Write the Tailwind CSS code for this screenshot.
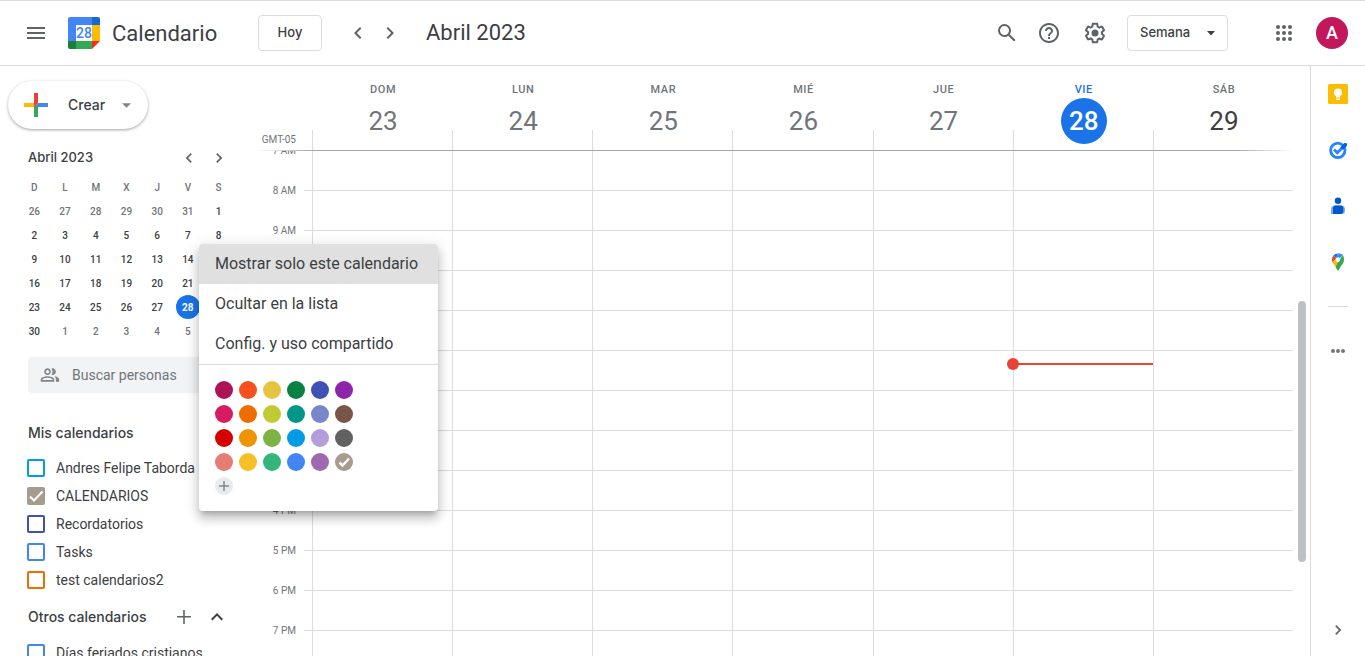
<!DOCTYPE html>
<html lang="es">
<head>
    <meta charset="UTF-8">
    <meta name="viewport" content="width=device-width, initial-scale=1.0">
    <title>Calendario - Semana</title>
    <script src="https://cdn.jsdelivr.net/npm/@tailwindcss/browser@4"></script>
</head>
<body class="flex flex-col h-screen overflow-hidden bg-white text-[#3c4043] font-['Roboto',sans-serif]">

    <!-- Top bar -->
    <header class="flex items-center shrink-0 h-[66px] border-y border-[#dadce0] pl-6 pr-[17px]">
        <button class="text-[#5f6368]" aria-label="Menú principal">
            <svg class="size-6" viewBox="0 0 24 24" fill="currentColor"><path d="M3 18h18v-2H3v2zm0-5h18v-2H3v2zm0-7v2h18V6H3z"/></svg>
        </button>
        <div class="flex items-center ml-5 gap-3">
            <svg class="size-8" viewBox="0 0 32 32">
                <path d="M2 0h22v8H8v16H0V2a2 2 0 0 1 2-2z" fill="#4285f4"/>
                <path d="M24 0h6a2 2 0 0 1 2 2v6h-8z" fill="#1967d2"/>
                <path d="M24 8h8v16h-8z" fill="#fbbc04"/>
                <path d="M0 24h8v8H2a2 2 0 0 1-2-2z" fill="#188038"/>
                <path d="M8 24h16v8H8z" fill="#34a853"/>
                <path d="M24 24h8l-8 8z" fill="#f22d25"/>
                <path d="M8 8h16v16H8z" fill="#fff"/>
                <text x="16" y="21" text-anchor="middle" font-family="Roboto" font-size="14" font-weight="500" fill="#4285f4">28</text>
            </svg>
            <span class="w-[108px] pt-0.5 text-[22px] leading-7">Calendario</span>
        </div>
        <button class="ml-[38px] h-9 w-16 border border-[#dadce0] rounded font-['Inter',sans-serif] text-[13px] font-medium">Hoy</button>
        <button class="ml-6 text-[#5f6368]" aria-label="Semana anterior">
            <svg class="size-6" viewBox="0 0 24 24" fill="currentColor"><path d="M15.41 7.41 14 6l-6 6 6 6 1.41-1.41L10.83 12z"/></svg>
        </button>
        <button class="ml-2 text-[#5f6368]" aria-label="Semana siguiente">
            <svg class="size-6" viewBox="0 0 24 24" fill="currentColor"><path d="M10 6 8.59 7.41 13.17 12l-4.58 4.59L10 18l6-6z"/></svg>
        </button>
        <h1 class="ml-6 text-[22px] leading-7">Abril 2023</h1>

        <div class="flex items-center ml-auto text-[#5f6368]">
            <button aria-label="Buscar">
                <svg class="size-6" viewBox="0 0 24 24" fill="currentColor"><path d="M20.49 19l-5.73-5.73C15.53 12.2 16 10.91 16 9.5A6.5 6.5 0 1 0 9.5 16c1.41 0 2.7-.47 3.77-1.24L19 20.49 20.49 19zM5 9.5C5 7.01 7.01 5 9.5 5S14 7.01 14 9.5 11.99 14 9.5 14 5 11.99 5 9.5z"/></svg>
            </button>
            <button class="ml-[18px]" aria-label="Ayuda">
                <svg class="size-6" viewBox="0 0 24 24" fill="currentColor"><path d="M11 18h2v-2h-2v2zm1-16C6.48 2 2 6.48 2 12s4.48 10 10 10 10-4.48 10-10S17.52 2 12 2zm0 18c-4.41 0-8-3.59-8-8s3.59-8 8-8 8 3.59 8 8-3.59 8-8 8zm0-14c-2.21 0-4 1.79-4 4h2c0-1.1.9-2 2-2s2 .9 2 2c0 2-3 1.75-3 5h2c0-2.25 3-2.5 3-5 0-2.21-1.79-4-4-4z"/></svg>
            </button>
            <button class="ml-[22px]" aria-label="Configuración">
                <svg class="size-6" viewBox="0 0 24 24" fill="currentColor"><path d="M13.85 22.25h-3.7c-.74 0-1.36-.54-1.45-1.27l-.27-1.89c-.27-.14-.53-.29-.79-.46l-1.8.72c-.7.26-1.47-.03-1.81-.65L2.2 15.53c-.35-.66-.2-1.44.36-1.88l1.53-1.19c-.01-.15-.02-.3-.02-.46 0-.15.01-.31.02-.46l-1.52-1.19c-.59-.45-.74-1.26-.37-1.88l1.85-3.19c.34-.62 1.11-.9 1.79-.63l1.81.73c.26-.17.52-.32.78-.46l.27-1.91c.09-.7.71-1.25 1.44-1.25h3.7c.74 0 1.36.54 1.45 1.27l.27 1.89c.27.14.53.29.79.46l1.8-.72c.71-.26 1.48.03 1.82.65l1.84 3.18c.36.66.2 1.44-.36 1.88l-1.52 1.19c.01.15.02.3.02.46s-.01.31-.02.46l1.52 1.19c.56.45.72 1.23.37 1.86l-1.86 3.22c-.34.62-1.11.9-1.8.63l-1.8-.72c-.26.17-.52.32-.78.46l-.27 1.91c-.1.68-.72 1.22-1.46 1.22zm-3.23-2h2.76l.37-2.55.53-.22c.44-.18.88-.44 1.34-.78l.45-.34 2.38.96 1.38-2.4-2.03-1.58.07-.56c.03-.26.06-.51.06-.78s-.03-.53-.06-.78l-.07-.56 2.03-1.58-1.39-2.4-2.39.96-.45-.35c-.42-.32-.87-.58-1.33-.77l-.52-.22-.37-2.55h-2.76l-.37 2.55-.53.21c-.44.19-.88.44-1.34.79l-.45.33-2.38-.95-1.39 2.39 2.03 1.58-.07.56a7 7 0 0 0-.06.79c0 .26.02.53.06.78l.07.56-2.03 1.58 1.38 2.4 2.39-.96.45.35c.43.33.86.58 1.33.77l.53.22.38 2.55z"/><circle cx="12" cy="12" r="3.5"/></svg>
            </button>
            <div class="relative ml-5">
                <select aria-label="Vista" class="appearance-none block h-9 w-[101px] pl-3 border border-[#dadce0] rounded bg-white font-['Inter',sans-serif] text-[13px] font-medium text-[#3c4043]">
                    <option>Día</option>
                    <option selected>Semana</option>
                    <option>Mes</option>
                </select>
                <svg class="absolute right-3 top-4 w-[10px] h-[5px] pointer-events-none text-[#3c4043]" viewBox="0 0 10 5" fill="currentColor"><path d="M1 0h8L5 4.500z"/></svg>
            </div>
            <button class="ml-11" aria-label="Aplicaciones">
                <svg class="size-6" viewBox="0 0 24 24" fill="currentColor"><circle cx="6" cy="6" r="2"/><circle cx="12" cy="6" r="2"/><circle cx="18" cy="6" r="2"/><circle cx="6" cy="12" r="2"/><circle cx="12" cy="12" r="2"/><circle cx="18" cy="12" r="2"/><circle cx="6" cy="18" r="2"/><circle cx="12" cy="18" r="2"/><circle cx="18" cy="18" r="2"/></svg>
            </button>
            <button class="ml-5 size-8 rounded-full bg-[#c2185b] text-white text-lg font-medium" aria-label="Cuenta">A</button>
        </div>
    </header>

    <div class="flex flex-1 min-h-0">

        <!-- Sidebar -->
        <aside class="relative z-10 w-64 shrink-0">
            <button class="flex items-center mt-[15px] ml-2 h-12 w-[140px] pl-[10px] rounded-full bg-white font-['Inter',sans-serif] text-sm font-medium shadow-[0_1px_2px_0_rgba(60,64,67,0.3),0_1px_3px_1px_rgba(60,64,67,0.15)]">
                <svg class="size-9" viewBox="0 0 36 36"><path fill="#34A853" d="M16 16v14h4V20z"/><path fill="#4285F4" d="M30 16H20l-4 4h14z"/><path fill="#FBBC05" d="M6 16v4h10l4-4z"/><path fill="#EA4335" d="M20 16V6h-4v14z"/></svg>
                <span class="ml-[14px] w-[54px] text-left">Crear</span>
                <svg class="w-[9px] h-[5px] text-[#80868b]" viewBox="0 0 10 5" fill="currentColor"><path d="M0 0h10L5 5z"/></svg>
            </button>

            <!-- Mini calendar -->
            <div class="flex items-center mt-[17px] pl-7 h-6">
                <h2 class="font-['Inter',sans-serif] text-[13px] font-medium w-[151px]">Abril 2023</h2>
                <button class="text-[#5f6368]" aria-label="Mes anterior">
                    <svg class="size-5" viewBox="0 0 24 24" fill="currentColor"><path d="M15.410 7.410 14 6l-6 6 6 6 1.410-1.410L10.830 12z"/></svg>
                </button>
                <button class="ml-[10px] text-[#5f6368]" aria-label="Mes siguiente">
                    <svg class="size-5" viewBox="0 0 24 24" fill="currentColor"><path d="M10 6 8.590 7.410 13.170 12l-4.580 4.590L10 18l6-6z"/></svg>
                </button>
            </div>
            <table class="mt-[5px] ml-[19px] w-[215px] table-fixed text-center text-[10px] font-medium">
                <thead class="text-[#70757a]">
                    <tr class="h-6"><th class="font-medium">D</th><th class="font-medium">L</th><th class="font-medium">M</th><th class="font-medium">X</th><th class="font-medium">J</th><th class="font-medium">V</th><th class="font-medium">S</th></tr>
                </thead>
                <tbody id="miniDays"></tbody>
            </table>

            <label class="flex items-center mt-[14px] mx-7 h-9 pl-3 rounded bg-[#f1f3f4] text-[#80868b]">
                <svg class="size-5 shrink-0" viewBox="0 0 24 24" fill="currentColor"><path d="M9 12c2.200 0 4-1.800 4-4s-1.800-4-4-4-4 1.800-4 4 1.800 4 4 4zm0-6c1.100 0 2 .9 2 2s-.9 2-2 2-2-.9-2-2 .9-2 2-2zM15 12c2.200 0 4-1.800 4-4s-1.800-4-4-4c-.5 0-.9.100-1.300.200.800 1.100 1.300 2.400 1.300 3.800s-.5 2.700-1.300 3.800c.4.100.8.200 1.300.200zM9 13.400c-2.700 0-8.100 1.300-8.100 4V20h16.200v-2.600c0-2.700-5.400-4-8.100-4zM15.100 18H2.900v-.6c.2-.7 3.300-2 6.100-2s5.900 1.300 6.100 2zM17 13.600c1.200.9 2.100 2.100 2.100 3.800V20H23v-2.600c0-2.300-3.500-3.500-6-3.800z"/></svg>
                <input type="text" placeholder="Buscar personas" aria-label="Buscar personas" class="ml-3 w-32 text-sm bg-transparent outline-none placeholder:text-[#70757a]">
            </label>

            <h2 class="mt-[30px] ml-7 font-['Inter',sans-serif] text-sm leading-5 font-medium">Mis calendarios</h2>
            <ul class="mt-[11px] pl-[27px] text-sm">
                <li class="h-7"><label class="flex items-center h-7 gap-[11px] whitespace-nowrap"><input type="checkbox" class="appearance-none size-[18px] shrink-0 rounded-xs border-2 border-[#039be5]">Andres Felipe Taborda</label></li>
                <li class="h-7"><label class="relative flex items-center h-7 gap-[11px]"><input type="checkbox" checked class="appearance-none size-[18px] shrink-0 rounded-xs bg-[#a79b8e]">CALENDARIOS
                    <svg class="absolute left-0 size-[18px] pointer-events-none" viewBox="0 0 18 18" fill="none" stroke="#fff" stroke-width="2"><path d="M3 9.500l4 4 8.500-9"/></svg></label></li>
                <li class="h-7"><label class="flex items-center h-7 gap-[11px]"><input type="checkbox" class="appearance-none size-[18px] shrink-0 rounded-xs border-2 border-[#3f51b5]">Recordatorios</label></li>
                <li class="h-7"><label class="flex items-center h-7 gap-[11px]"><input type="checkbox" class="appearance-none size-[18px] shrink-0 rounded-xs border-2 border-[#4285f4]">Tasks</label></li>
                <li class="h-7"><label class="flex items-center h-7 gap-[11px]"><input type="checkbox" class="appearance-none size-[18px] shrink-0 rounded-xs border-2 border-[#ef6c00]">test calendarios2</label></li>
            </ul>

            <div class="flex items-center mt-[11px] pl-7 h-6">
                <h2 class="w-36 font-['Inter',sans-serif] text-sm font-medium">Otros calendarios</h2>
                <button class="text-[#5f6368]" aria-label="Agregar otros calendarios">
                    <svg class="size-6" viewBox="0 0 24 24" fill="currentColor"><path d="M19 11h-6.200V5h-1.600v6H5v1.600h6.200V19h1.600v-6.400H19z"/></svg>
                </button>
                <button class="ml-[9px]" aria-label="Contraer">
                    <svg class="size-6" viewBox="0 0 24 24" fill="currentColor"><path d="M12 8l-6 6 1.410 1.410L12 10.830l4.590 4.580L18 14z"/></svg>
                </button>
            </div>
            <ul class="mt-[10px] pl-[27px] text-sm">
                <li class="h-7"><label class="flex items-center h-7 gap-[11px]"><input type="checkbox" class="appearance-none size-[18px] shrink-0 rounded-xs border-2 border-[#4285f4]">Días feriados cristianos</label></li>
            </ul>

            <!-- Calendar options menu -->
            <div class="absolute left-[199px] top-[178px] w-[239px] rounded bg-white overflow-hidden shadow-[0_5px_5px_-3px_rgba(0,0,0,0.2),0_8px_10px_1px_rgba(0,0,0,0.14),0_3px_14px_2px_rgba(0,0,0,0.12)]">
                <button class="block w-full h-10 pl-4 text-left text-base bg-[#e0e0e0]">Mostrar solo este calendario</button>
                <button class="block w-full h-10 pl-4 text-left text-base">Ocultar en la lista</button>
                <button class="block w-full h-10 pl-4 text-left text-base">Config. y uso compartido</button>
                <div id="swatches" class="grid grid-cols-[repeat(6,18px)] gap-[6px] px-4 pt-4 pb-4 border-t border-[#dadce0]"></div>
            </div>
        </aside>

        <!-- Week view -->
        <main class="flex flex-col flex-1 min-w-0 relative pr-[17px]">
            <div class="flex h-[84px] shrink-0">
                <div class="w-14 flex items-end justify-end pr-4 pb-1 text-[10px] leading-3 text-[#70757a] whitespace-nowrap">GMT-05</div>
                <div id="weekHead" class="grid grid-cols-7 flex-1 text-center"></div>
            </div>
            <div class="h-px shrink-0 bg-[linear-gradient(to_right,transparent,#a5a6a9_56px,#a5a6a9_calc(100%-56px),transparent)]"></div>
            <div class="flex flex-1 min-h-0 overflow-hidden">
                <div id="hours" class="w-12 -mt-5 pr-2 text-right text-[10px] text-[#70757a]"></div>
                <div id="ticks" class="w-2"></div>
                <div id="weekGrid" class="grid grid-cols-7 flex-1"></div>
            </div>
            <div class="absolute right-1 top-[235px] w-2 h-[261px] rounded-full bg-[#bdc1c6]"></div>
        </main>

        <!-- Side panel -->
        <nav class="flex flex-col items-center w-[55px] shrink-0 border-l border-[#dadce0] pt-[18px] pb-4">
            <button aria-label="Keep">
                <svg class="size-5" viewBox="0 0 20 20"><rect width="20" height="20" rx="1.500" fill="#fbbc04"/><path d="M10 4.500a4 4 0 0 0-2 7.500v1.500h4V12a4 4 0 0 0-2-7.500zM8 14.500h4V16H8z" fill="#fff"/></svg>
            </button>
            <button class="mt-9" aria-label="Tasks">
                <svg class="size-5" viewBox="0 0 20 20" fill="none"><circle cx="9.800" cy="10.300" r="7.200" stroke="#2684fc" stroke-width="2.800"/><path d="M6 9.500l3.300 3.300 5-5" stroke="#2684fc" stroke-width="2.800"/><path d="M12.300 7.200l4-4.200 2.700.2v2.600l-4 4z" fill="#0066da"/></svg>
            </button>
            <button class="mt-9" aria-label="Contactos">
                <svg class="size-5" viewBox="0 0 20 20"><circle cx="10" cy="4.800" r="3.200" fill="#0057cc"/><path d="M7 9.600h6a4 4 0 0 1 4 4V15a3 3 0 0 1-3 3H3v-4.400a4 4 0 0 1 4-4z" fill="#7baaf7"/><path d="M8 9.600h4.500a2.800 2.800 0 0 1 2.800 2.800V15a3 3 0 0 1-3 3H5v-5.400a3 3 0 0 1 3-3z" fill="#0057cc"/></svg>
            </button>
            <button class="mt-9" aria-label="Maps">
                <svg class="size-5" viewBox="0 0 20 20"><path d="M10 1.500c-1.900 0-3.600.9-4.700 2.300L8.200 6.300z" fill="#1a73e8"/><path d="M5.300 3.800A6 6 0 0 0 4 7.600c0 1.200.2 2.100.6 3l3.600-4.300z" fill="#ea4335"/><path d="M10 1.500l-1.800 4.800a2.300 2.300 0 0 1 3.600 0l2.900-3.500A6 6 0 0 0 10 1.500z" fill="#4285f4"/><path d="M8.200 6.300l-3.600 4.300c.7 1.500 1.800 2.700 2.900 4.200l4.300-5.100z" fill="#fbbc04"/><path d="M14.700 2.800L7.500 14.800c1 1.400 1.500 3.700 2.500 3.700s1.500-2.300 2.500-3.700C14.200 12.500 16 10.900 16 7.600c0-1.900-.5-3.600-1.300-4.800z" fill="#34a853"/><circle cx="10" cy="7.700" r="2.200" fill="#fff"/></svg>
            </button>
            <hr class="mt-[34px] w-5 border-[#dadce0]">
            <button class="mt-[34px] text-[#757575]" aria-label="Más">
                <svg class="size-5" viewBox="0 0 20 20" fill="currentColor"><circle cx="5" cy="10" r="2"/><circle cx="10" cy="10" r="2"/><circle cx="15" cy="10" r="2"/></svg>
            </button>
            <button class="mt-auto text-[#5f6368]" aria-label="Ocultar panel lateral">
                <svg class="size-5" viewBox="0 0 24 24" fill="currentColor"><path d="M10 6 8.590 7.410 13.170 12l-4.580 4.590L10 18l6-6z"/></svg>
            </button>
        </nav>
    </div>

    <script>
        // Mini calendar: starts on March 26
        const first = new Date(2023, 2, 26);
        let rows = '';
        for (let w = 0; w < 6; w++) {
            rows += '<tr class="h-6">';
            for (let d = 0; d < 7; d++) {
                const day = new Date(2023, 2, first.getDate() + w * 7 + d);
                const today = day.getMonth() === 3 && day.getDate() === 28;
                const color = day.getMonth() === 3 ? 'text-[#3c4043]' : 'text-[#70757a]';
                rows += today
                    ? '<td><span class="flex items-center justify-center mx-auto size-6 rounded-full bg-[#1a73e8] text-white font-bold">28</span></td>'
                    : `<td class="${color}">${day.getDate()}</td>`;
            }
            rows += '</tr>';
        }
        document.getElementById('miniDays').innerHTML = rows;

        // Color picker
        const colors = [
            '#ad1457', '#f4511e', '#e4c441', '#0b8043', '#3f51b5', '#8e24aa',
            '#d81b60', '#ef6c00', '#c0ca33', '#009688', '#7986cb', '#795548',
            '#d50000', '#f09300', '#7cb342', '#039be5', '#b39ddb', '#616161',
            '#e67c73', '#f6bf26', '#33b679', '#4285f4', '#9e69af', '#a79b8e',
        ];
        const check = '<svg class="size-[18px]" viewBox="0 0 18 18" fill="none" stroke="#fff" stroke-width="2.500"><path d="M4.500 9.500l3 3 6.500-7"/></svg>';
        const plus = '<svg class="size-[18px]" viewBox="0 0 18 18" fill="none" stroke="#80868b" stroke-width="1.500"><path d="M9 4v10M4 9h10"/></svg>';
        document.getElementById('swatches').innerHTML = colors.map((c, i) =>
            `<button class="size-[18px] rounded-full" style="background:${c}" aria-label="Color ${i + 1}">${i === 23 ? check : ''}</button>`
        ).join('') + `<button class="size-[18px] rounded-full bg-[#e8eaed]" aria-label="Agregar color">${plus}</button>`;

        // Week header
        const week = [['DOM', 23], ['LUN', 24], ['MAR', 25], ['MIÉ', 26], ['JUE', 27], ['VIE', 28], ['SÁB', 29]];
        document.getElementById('weekHead').innerHTML = week.map(([name, n]) => {
            let label = 'text-[#70757a]', num = 'text-[#70757a]';
            if (n === 28) { label = 'text-[#1a73e8]'; num = 'bg-[#1a73e8] text-white font-medium'; }
            if (n === 29) num = 'text-[#3c4043]';
            return `<div class="relative flex flex-col items-center pt-4 pl-0.5">
                <span class="absolute left-0 bottom-0 w-px h-5 bg-[#dadce0]"></span>
                <span class="h-4 text-[11px] leading-4 font-medium tracking-wider ${label}">${name}</span>
                <span class="flex items-center justify-center size-[46px] rounded-full text-[26px] ${num}">${n}</span>
            </div>`;
        }).join('');

        // Hour rows
        const hours = ['7 AM', '8 AM', '9 AM', '10 AM', '11 AM', '12 PM', '1 PM', '2 PM', '3 PM', '4 PM', '5 PM', '6 PM', '7 PM'];
        const cell = '<div class="h-10 border-b border-[#dadce0]"></div>';
        document.getElementById('hours').innerHTML = hours.map(h => `<div class="h-10 leading-10">${h}</div>`).join('');
        document.getElementById('ticks').innerHTML = cell.repeat(hours.length);
        const now = '<div class="absolute left-0 right-0 top-[212px] h-[2px] bg-[#ea4335]"><span class="absolute -left-[7px] -top-[5px] size-3 rounded-full bg-[#ea4335]"></span></div>';
        document.getElementById('weekGrid').innerHTML = week.map(([, n]) =>
            `<div class="relative border-l border-[#dadce0]">${cell.repeat(hours.length)}${n === 28 ? now : ''}</div>`
        ).join('');
    </script>
</body>
</html>
